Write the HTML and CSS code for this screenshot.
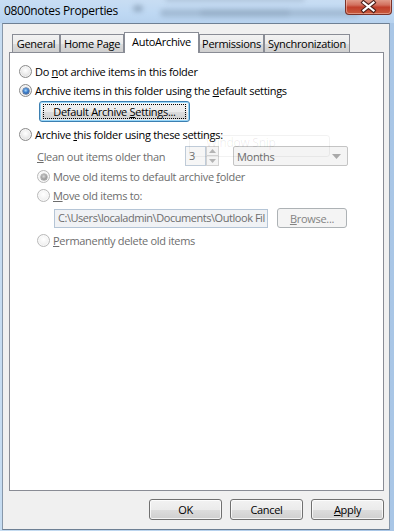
FILE: index.html
```html
<!DOCTYPE html>
<html>
<head>
<meta charset="utf-8">
<link rel="stylesheet" href="styles.css">
</head>
<body>
<div class="window">
  <div class="titlebar">
    <span class="glass-blob blob-a"></span>
    <span class="glass-blob blob-b"></span>
    <span class="glass-blob blob-c"></span>
    <span class="glass-blob blob-d"></span>
    <span class="title">0800notes Properties</span>
    <div class="close">
      <svg width="47" height="15" viewBox="0 0 47 15">
        <path d="M18.5 3.5 L28.5 11.5 M28.5 3.5 L18.5 11.5" stroke="#4a1f1a" stroke-width="4.2" stroke-linecap="square"/>
        <path d="M18.5 3.5 L28.5 11.5 M28.5 3.5 L18.5 11.5" stroke="#ffffff" stroke-width="2.2" stroke-linecap="square"/>
      </svg>
    </div>
  </div>
  <div class="frame">
    <div class="client">
      <div class="tabs">
        <div class="tab tab-general">General</div>
        <div class="tab tab-home">Home Page</div>
        <div class="tab tab-auto selected">AutoArchive</div>
        <div class="tab tab-perm">Permissions</div>
        <div class="tab tab-sync">Synchronization</div>
      </div>
      <div class="panel">
        <div class="row r1">
          <span class="radio"></span>
          <span class="label">Do <u>n</u>ot archive items in this folder</span>
        </div>
        <div class="row">
          <span class="radio checked"></span>
          <span class="label">Archive items in this folder using the <u>d</u>efault settings</span>
        </div>
        <div class="btn btn-default btn-settings"><span class="focus">Default Archive <u>S</u>ettings...</span></div>
        <div class="row r3">
          <span class="radio"></span>
          <span class="label">Archive <u>t</u>his folder using these settings:</span>
        </div>
        <div class="row sub clean-row">
          <span class="label disabled clean-label"><u>C</u>lean out items older than</span>
          <span class="spin-box">3</span>
          <span class="spin-arrows">
            <span class="spin-up"><svg width="7" height="4" viewBox="0 0 7 4"><path d="M0 4 L3.5 0 L7 4 Z" fill="#b4b4b4"/></svg></span>
            <span class="spin-down"><svg width="7" height="4" viewBox="0 0 7 4"><path d="M0 0 L3.5 4 L7 0 Z" fill="#b4b4b4"/></svg></span>
          </span>
          <span class="combo">
            <span class="combo-text">Months</span>
            <svg width="9" height="5" viewBox="0 0 9 5"><path d="M0 0 L4.5 5 L9 0 Z" fill="#a9a9a9"/></svg>
          </span>
        </div>
        <div class="row sub r4">
          <span class="radio disabled checked"></span>
          <span class="label disabled">Move old items to default archive <u>f</u>older</span>
        </div>
        <div class="row sub">
          <span class="radio disabled"></span>
          <span class="label disabled"><u>M</u>ove old items to:</span>
        </div>
        <div class="row path-row">
          <span class="path-box">C:\Users\localadmin\Documents\Outlook Fil</span>
          <span class="btn btn-disabled btn-browse"><u>B</u>rowse...</span>
        </div>
        <div class="row sub r6">
          <span class="radio disabled"></span>
          <span class="label disabled"><u>P</u>ermanently delete old items</span>
        </div>
        <div class="snip-ghost"><span class="snip-text">Window Snip</span></div>
      </div>
      <div class="footer">
        <div class="btn btn-foot">OK</div>
        <div class="btn btn-foot">Cancel</div>
        <div class="btn btn-foot"><u>A</u>pply</div>
      </div>
    </div>
  </div>
</div>
</body>
</html>
```

FILE: styles.css
```css
html, body {
  margin: 0;
  padding: 0;
  background: #ffffff;
}

.window {
  width: 394px;
  height: 531px;
  display: flex;
  flex-direction: column;
  background: linear-gradient(to right, #c6dcf1, #b9d3ee 50%, #a9c6e6);
  font-family: "Open Sans", "Noto Sans", sans-serif;
  font-size: 11px;
  letter-spacing: -0.3px;
  color: #000000;
  overflow: hidden;
}

/* ---------- title bar ---------- */
.titlebar {
  position: relative;
  height: 23px;
  flex: none;
  display: flex;
  align-items: flex-start;
  background: linear-gradient(to bottom, #c8ddf3 0%, #bed8f3 60%, #b7d2ee 100%);
  overflow: hidden;
}

.glass-blob {
  position: absolute;
  background: #6f859c;
  filter: blur(2.5px);
  border-radius: 4px;
  opacity: 0.35;
}
.blob-a { left: 160px; top: 9px; width: 200px; height: 8px; }
.blob-b { left: 165px; top: -5px; width: 140px; height: 7px; opacity: 0.25; }
.blob-c { left: 133px; top: 5px; width: 10px; height: 7px; opacity: 0.5; }
.blob-d { left: 200px; top: 10px; width: 90px; height: 6px; opacity: 0.2; }

.title {
  position: relative;
  margin: 4px 0 0 4px;
  font-size: 12px;
  letter-spacing: -0.3px;
  line-height: 14px;
  color: #000000;
}

.close {
  position: relative;
  margin-left: auto;
  margin-right: 2px;
  width: 47px;
  height: 16px;
  margin-top: -1px;
  box-sizing: border-box;
  border: 1px solid #7a3229;
  border-top: none;
  border-radius: 0 0 4px 4px;
  background: linear-gradient(to bottom, #e4a392 0%, #d2705e 40%, #c13f2b 55%, #c85b3d 100%);
  box-shadow: inset 0 0 0 1px rgba(255, 220, 210, 0.45);
}
.close svg { display: block; margin-left: -1px; }

/* ---------- frame / client ---------- */
.frame {
  flex: 1;
  padding: 0 4px 1px 2px;
  display: flex;
}

.client {
  flex: 1;
  border: 1px solid #6e8094;
  border-left-color: #8797a9;
  border-right-color: #8797a9;
  background: #f0f0f0;
  padding: 8px 5px 9px 6px;
  display: flex;
  flex-direction: column;
}

/* ---------- tabs ---------- */
.tabs {
  display: flex;
  align-items: flex-end;
  height: 20px;
  padding-left: 3px;
  position: relative;
  z-index: 2;
}

.tab {
  box-sizing: border-box;
  height: 18px;
  border: 1px solid #898c95;
  border-bottom: none;
  background: linear-gradient(to bottom, #f2f2f2 0%, #ebebeb 50%, #dddddd 51%, #cfcfcf 100%);
  display: flex;
  align-items: center;
  justify-content: center;
  line-height: 14px;
  padding-top: 1px;
}
.tab-general { width: 48px; }
.tab-home { width: 64px; }
.tab-auto { width: 75px; }
.tab-perm { width: 65px; }
.tab-sync { width: 86px; }

.tab.selected {
  height: 21px;
  margin-bottom: -1px;
  background: #ffffff;
  padding-top: 0;
  padding-bottom: 3px;
}

/* ---------- panel ---------- */
.panel {
  position: relative;
  box-sizing: border-box;
  height: 439px;
  border: 1px solid #898c95;
  background: #ffffff;
  padding: 9px 0 0 9px;
  display: flex;
  flex-direction: column;
}

.row {
  display: flex;
  align-items: center;
  height: 19px;
  flex: none;
}
.r3 { margin-top: 3px; }
.sub { margin-left: 18px; }
.clean-row { margin-top: 2px; height: 20px; }
.r4 { margin-top: 1px; }
.path-row { margin-top: 3px; height: 20px; margin-left: 35px; }
.r6 { margin-top: 3px; }

.label {
  margin-left: 3px;
  white-space: nowrap;
  line-height: 15px;
}
.label.disabled { color: #6d6d6d; }
.clean-label { margin-left: 0; width: 148px; }

/* ---------- radio ---------- */
.radio {
  position: relative;
  flex: none;
  box-sizing: border-box;
  width: 13px;
  height: 13px;
  border-radius: 50%;
  border: 1px solid #8b8b8b;
  background: radial-gradient(circle at 50% 40%, #ffffff 0%, #f1f1f1 35%, #dcdcdc 75%, #cfcfcf 100%);
  box-shadow: inset 0 0 0 1px rgba(255, 255, 255, 0.6);
}
.radio.checked::after {
  content: "";
  position: absolute;
  left: 2.5px;
  top: 2.5px;
  width: 6px;
  height: 6px;
  border-radius: 50%;
  background: radial-gradient(circle at 45% 40%, #a9d8fb 0%, #3d7fcb 45%, #163f85 100%);
  box-shadow: 0 0 0 0.5px #1b3f74;
}
.radio.disabled {
  border-color: #b9b9b9;
  background: radial-gradient(circle at 50% 40%, #ffffff 0%, #f6f6f6 40%, #e6e6e6 100%);
}
.radio.disabled.checked::after {
  background: radial-gradient(circle at 45% 40%, #dadada 0%, #a3a3a3 50%, #7c7c7c 100%);
  box-shadow: 0 0 0 0.5px #8a8a8a;
}

/* ---------- buttons ---------- */
.btn {
  box-sizing: border-box;
  height: 21px;
  border: 1px solid #707070;
  border-radius: 3px;
  background: linear-gradient(to bottom, #f2f2f2 0%, #ebebeb 50%, #dddddd 51%, #cfcfcf 100%);
  box-shadow: inset 0 0 0 1px rgba(255, 255, 255, 0.75);
  display: flex;
  align-items: center;
  justify-content: center;
  white-space: nowrap;
  line-height: 15px;
  flex: none;
}

.btn-settings {
  margin-top: 1px;
  margin-left: 20px;
  width: 151px;
}
.btn-default {
  border-color: #3c7fb1;
  box-shadow: inset 0 0 0 1px #97d6f8, inset 0 0 0 2px rgba(255, 255, 255, 0.5);
}
.focus {
  box-sizing: border-box;
  width: 143px;
  height: 15px;
  border: 1px dotted #000000;
  text-align: center;
  line-height: 13px;
}

.btn-disabled {
  border-color: #adb2b5;
  background: #f4f4f4;
  box-shadow: none;
  color: #838383;
}
.btn-browse { width: 70px; margin-left: 9px; height: 20px; }

.footer {
  margin-top: 8px;
  display: flex;
  justify-content: flex-end;
  gap: 8px;
}
.btn-foot { width: 73px; }

/* ---------- inputs ---------- */
.spin-box {
  box-sizing: border-box;
  width: 21px;
  height: 20px;
  border: 1px solid #bfcbd8;
  background: #f6f6f6;
  color: #6d6d6d;
  padding-left: 3px;
  line-height: 17px;
}
.spin-arrows {
  width: 13px;
  height: 20px;
  display: flex;
  flex-direction: column;
}
.spin-up, .spin-down {
  box-sizing: border-box;
  height: 10px;
  border: 1px solid #d2d2d2;
  background: #f4f4f4;
  display: flex;
  align-items: center;
  justify-content: center;
}
.spin-down { border-top: none; }

.combo {
  box-sizing: border-box;
  margin-left: 14px;
  width: 115px;
  height: 20px;
  border: 1px solid #c4c4c4;
  border-radius: 2px;
  background: #f4f4f4;
  display: flex;
  align-items: center;
  padding: 0 6px 0 3px;
  color: #6d6d6d;
}
.combo-text { flex: 1; }

.path-box {
  box-sizing: border-box;
  width: 214px;
  height: 19px;
  border: 1px solid #b5c5d6;
  background: #f0f2f5;
  color: #6d6d6d;
  padding-left: 3px;
  white-space: nowrap;
  overflow: hidden;
  line-height: 16px;
  letter-spacing: -0.45px;
}

/* Snipping-tool ghost overlay */
.snip-ghost {
  position: absolute;
  left: 179px;
  top: 82px;
  width: 141px;
  height: 22px;
  box-sizing: border-box;
  border: 1px solid rgba(0, 0, 0, 0.05);
  border-radius: 3px;
  pointer-events: none;
}
.snip-text {
  position: absolute;
  left: 16px;
  top: 1px;
  font-size: 12px;
  line-height: 11px;
  color: rgba(0, 0, 0, 0.08);
}
```
